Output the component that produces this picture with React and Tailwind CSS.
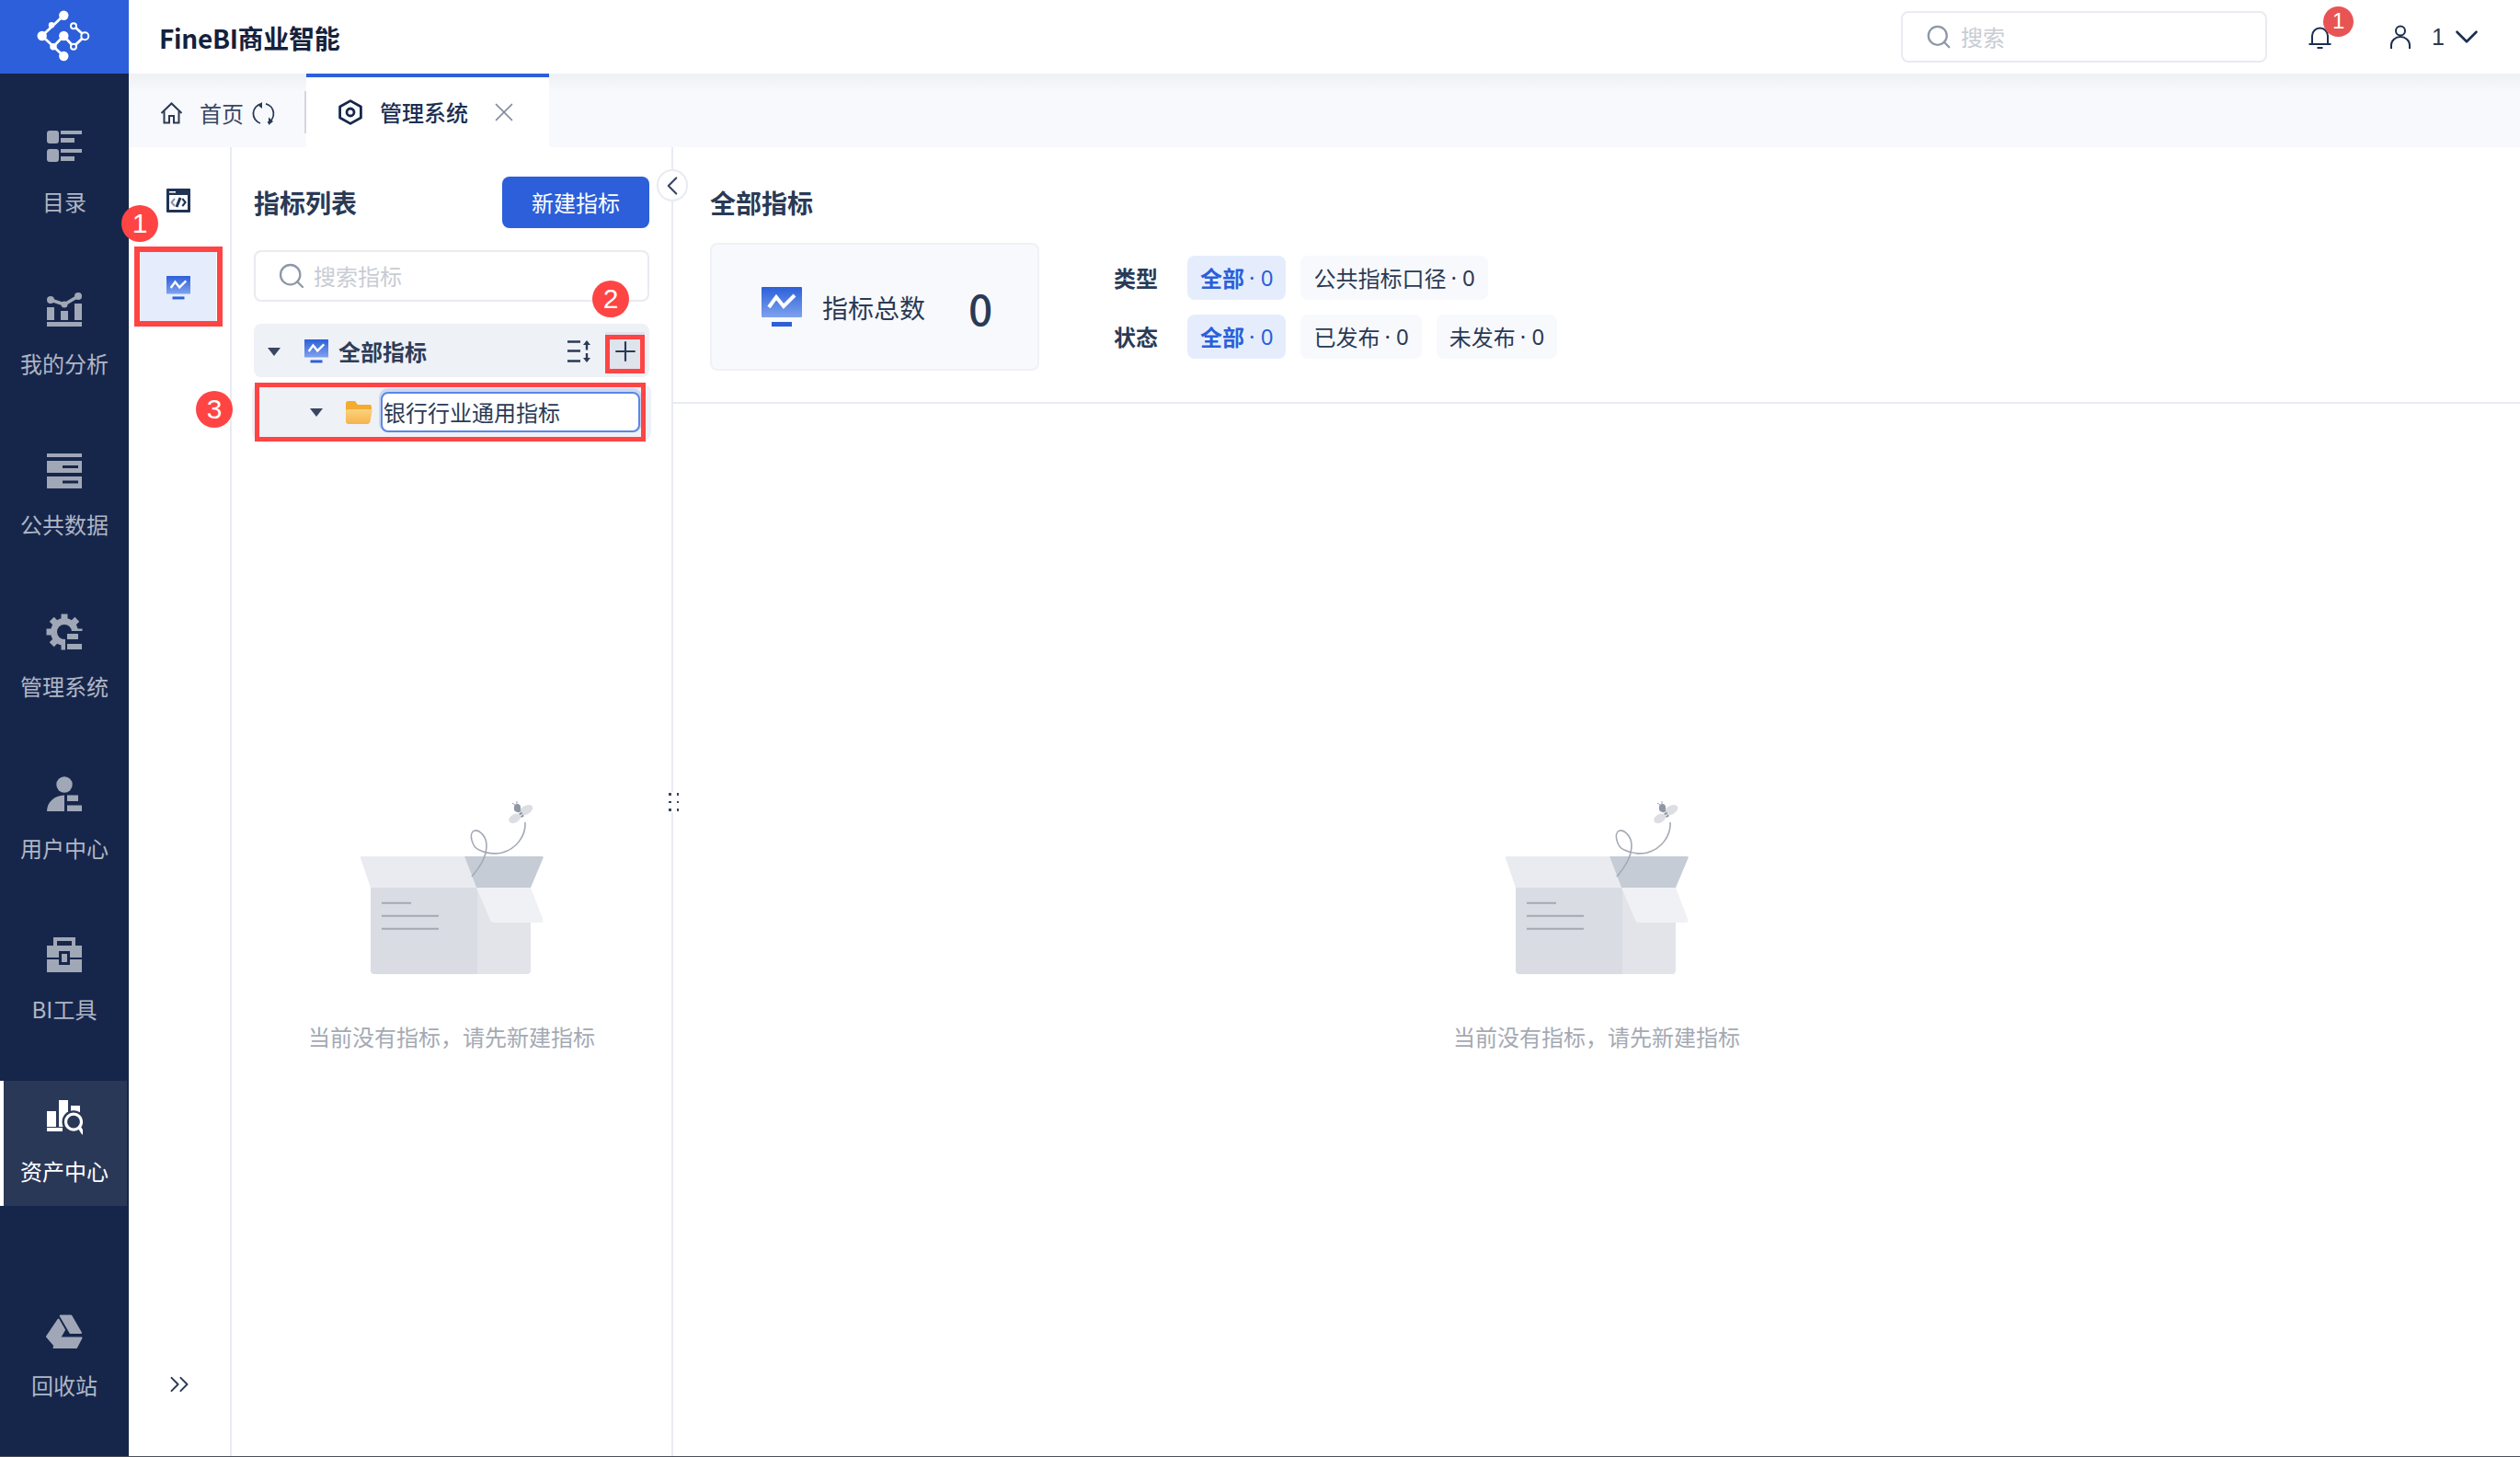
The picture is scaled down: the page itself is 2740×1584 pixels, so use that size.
import { Search, X, Plus, ChevronLeft, ChevronDown, ChevronsRight } from "lucide-react";

const SIDE_ICON = "#a0a7b6";
const SIDE_BG = "#16264b";

const Logo = () => (
  <svg width="80" height="80" viewBox="0 0 80 80" fill="none">
    <g stroke="#fff" strokeWidth="2.8">
      <path d="M39.3 16.7L15.7 39L39.3 61" />
      <path d="M28 50.7L39.3 39L50 50.7L62.3 39L50 28.3" />
    </g>
    <g fill="#fff">
      <circle cx="39.3" cy="16.7" r="5.2" />
      <circle cx="15.7" cy="39" r="5.2" />
      <circle cx="39.3" cy="39" r="5.2" />
      <circle cx="39.3" cy="61" r="5.2" />
      <circle cx="26" cy="27.3" r="3.2" />
      <circle cx="28" cy="50.7" r="3.8" />
    </g>
    <g fill="#2c5fd9" stroke="#fff" strokeWidth="2">
      <circle cx="50" cy="28.3" r="3" />
      <circle cx="62.3" cy="39.3" r="4" />
      <circle cx="50" cy="50.7" r="3" />
    </g>
  </svg>
);

const CatalogIcon = () => (
  <svg width="40" height="40" viewBox="0 0 40 40" fill={SIDE_ICON}>
    <rect x="1" y="2" width="13" height="14" rx="3" />
    <rect x="16" y="2" width="23" height="4" />
    <rect x="16" y="10" width="15" height="5" />
    <rect x="1" y="22" width="13" height="14" rx="3" />
    <rect x="16" y="22" width="23" height="4" />
    <rect x="16" y="30" width="15" height="5" />
  </svg>
);

const AnalysisIcon = () => (
  <svg width="40" height="40" viewBox="0 0 40 40" fill={SIDE_ICON}>
    <path d="M5 10L20 15L35 6" fill="none" stroke={SIDE_ICON} strokeWidth="3.5" />
    <circle cx="5" cy="10" r="4" />
    <circle cx="20" cy="15" r="3.5" />
    <circle cx="35" cy="6" r="4" />
    <rect x="1" y="18" width="8" height="14" />
    <rect x="16" y="22" width="8" height="10" />
    <rect x="31" y="14" width="8" height="18" />
    <rect x="1" y="34" width="38" height="5" />
  </svg>
);

const PublicDataIcon = () => (
  <svg width="40" height="40" viewBox="0 0 40 40" fill={SIDE_ICON}>
    <rect x="1" y="2" width="38" height="4" />
    <rect x="1" y="10" width="38" height="13" />
    <rect x="1" y="27" width="38" height="13" />
    <rect x="18" y="15" width="17" height="3" fill={SIDE_BG} />
    <rect x="18" y="31.5" width="17" height="3" fill={SIDE_BG} />
  </svg>
);

const TEETH = [0, 45, 90, 135, 180, 225, 270, 315];

const GearIcon = () => (
  <svg width="40" height="40" viewBox="0 0 40 40" fill={SIDE_ICON}>
    <mask id="gearCut">
      <rect width="40" height="40" fill="#fff" />
      <rect x="21" y="19" width="19" height="21" fill="#000" />
    </mask>
    <g mask="url(#gearCut)">
      <circle cx="20" cy="20" r="11.5" fill="none" stroke={SIDE_ICON} strokeWidth="7" />
      {TEETH.map((deg) => (
        <rect key={deg} x="16.5" y="0.5" width="7" height="6" transform={`rotate(${deg} 20 20)`} />
      ))}
    </g>
    <rect x="23" y="22" width="12" height="6" />
    <rect x="23" y="33" width="16" height="6" />
  </svg>
);

const UserCenterIcon = () => (
  <svg width="40" height="40" viewBox="0 0 40 40" fill={SIDE_ICON}>
    <circle cx="20" cy="10" r="8.7" />
    <path d="M1 39C1 29 9 22 20 21.5V39Z" />
    <rect x="23" y="21.5" width="12" height="6.5" />
    <rect x="23" y="32.5" width="16" height="6.5" />
  </svg>
);

const ToolIcon = () => (
  <svg width="40" height="40" viewBox="0 0 40 40" fill={SIDE_ICON}>
    <path d="M10 11V3H30V11" fill="none" stroke={SIDE_ICON} strokeWidth="4" />
    <rect x="1" y="10" width="38" height="13" />
    <rect x="1" y="25" width="38" height="14" />
    <rect x="14" y="16" width="12" height="15" fill={SIDE_BG} />
    <rect x="17" y="19" width="6" height="9" />
  </svg>
);

const AssetIcon = () => (
  <svg width="40" height="40" viewBox="0 0 40 40" fill="#fff">
    <rect x="1" y="14" width="10" height="17" />
    <rect x="14" y="2" width="10" height="29" />
    <rect x="27" y="8" width="10" height="12" />
    <rect x="1" y="32" width="17" height="4" />
    <circle cx="30" cy="25.7" r="12.5" fill="#2a3858" />
    <circle cx="30" cy="25.7" r="8.5" fill="none" stroke="#fff" strokeWidth="3.2" />
    <path d="M36.5 32L40 37.5" stroke="#fff" strokeWidth="3.6" strokeLinecap="round" />
  </svg>
);

const RecycleIcon = () => (
  <svg width="40" height="40" viewBox="0 0 40 40" fill={SIDE_ICON} stroke={SIDE_ICON} strokeWidth="2" strokeLinejoin="round">
    <path d="M15.7 3.5H27.3L38 22H26.5Z" />
    <path d="M13.5 7.5L20 18.7L10 36.5L1 26Z" />
    <path d="M14.5 27.5H38.5L33 38H8.5Z" />
  </svg>
);

const NAV_ITEMS = [
  ["目录", CatalogIcon],
  ["我的分析", AnalysisIcon],
  ["公共数据", PublicDataIcon],
  ["管理系统", GearIcon],
  ["用户中心", UserCenterIcon],
  ["BI工具", ToolIcon],
  ["资产中心", AssetIcon, true],
];

const NavItem = ({ label, Icon, active }) => (
  <div
    className={`flex h-[136px] flex-col items-center pt-[19px] ${
      active ? "mr-[2px] border-l-4 border-white bg-[#2a3858] pr-[2px] text-white" : "text-[#b0b6c4]"
    }`}
  >
    <Icon />
    <span className="mt-[21px] text-[24px] leading-[36px]">{label}</span>
  </div>
);

const MetricIcon = ({ id, className }) => (
  <svg className={className} viewBox="0 0 44 44">
    <defs>
      <linearGradient id={id} x1="0" y1="0" x2="0" y2="1">
        <stop offset="0%" stopColor="#2c5fd9" />
        <stop offset="100%" stopColor="#7fa2ee" />
      </linearGradient>
    </defs>
    <rect x="0" y="0" width="44" height="33" rx="1" fill={`url(#${id})`} />
    <path d="M8 22L16 11L24 21L36 9" fill="none" stroke="#fff" strokeWidth="4" />
    <rect x="11" y="38" width="22" height="5" fill="#2c5fd9" />
  </svg>
);

const CodeIcon = () => (
  <svg width="26" height="26" viewBox="0 0 26 26">
    <rect width="26" height="26" rx="1" fill="#1f3355" />
    <rect x="3" y="3" width="7" height="1.6" fill="#fff" />
    <rect x="3" y="7" width="20" height="16" fill="#fff" />
    <path d="M9 11L5.5 15L9 19M17 11L20.5 15L17 19" fill="none" stroke="#8b93a3" strokeWidth="2" />
    <path d="M15 10L11 20" fill="none" stroke="#1f3355" strokeWidth="3" />
    <path d="M17.5 11L20.5 15L17.5 19" fill="none" stroke="#1f3355" strokeWidth="2" />
  </svg>
);

const HomeIcon = () => (
  <svg width="25" height="24" viewBox="0 0 25 24" fill="none" stroke="#2a3a55" strokeWidth="2">
    <path d="M1.5 12L12.5 1.5L23.5 12" />
    <path d="M4.5 10V22.5H10V15H15V22.5H20.5V10" />
  </svg>
);

const RefreshIcon = () => (
  <svg width="25" height="25" viewBox="0 0 25 25" fill="none" stroke="#2a3a55" strokeWidth="1.8">
    <path d="M10 1.8A11 11 0 0 0 9 23" />
    <path d="M15 1.8A11 11 0 0 1 17 22.5" />
    <path d="M11 0V7L6.5 3.5Z" fill="#2a3a55" stroke="none" />
    <path d="M18 25V16.5L23 21Z" fill="#2a3a55" stroke="none" />
  </svg>
);

const HexIcon = () => (
  <svg width="26" height="28" viewBox="0 0 26 28" fill="none" stroke="#14284c" strokeWidth="2.8">
    <path d="M13 1.6L24.4 8V20L13 26.4L1.6 20V8Z" strokeLinejoin="round" />
    <circle cx="13" cy="14" r="4" />
  </svg>
);

const BellIcon = () => (
  <svg width="25" height="25" viewBox="0 0 25 25" fill="none" stroke="#1c2f52" strokeWidth="2">
    <path d="M4 20V11A8.5 8.5 0 0 1 21 11V20" />
    <path d="M0.5 20H24.5" />
    <path d="M9.5 24H15.5" />
  </svg>
);

const UserIcon = () => (
  <svg width="22" height="26" viewBox="0 0 22 26" fill="none" stroke="#1c2f52" strokeWidth="2">
    <circle cx="11" cy="6.5" r="5" />
    <path d="M1 26V22A10 9 0 0 1 21 22V26" />
  </svg>
);

const SortIcon = () => (
  <svg width="28" height="24" viewBox="0 0 28 24" fill="none" stroke="#2a3a55" strokeWidth="2.4">
    <path d="M0 1.5H14M0 11.5H14M0 22.5H14" />
    <path d="M21 4V10.5M21 14V20" />
    <path d="M21 0L25 5H17Z" fill="#2a3a55" stroke="none" />
    <path d="M21 24L25 19H17Z" fill="#2a3a55" stroke="none" />
  </svg>
);

const FolderIcon = () => (
  <svg width="29" height="25" viewBox="0 0 29 25">
    <defs>
      <linearGradient id="folderFront" x1="0" y1="0" x2="0" y2="1">
        <stop offset="0%" stopColor="#fbd27f" />
        <stop offset="100%" stopColor="#f5b34a" />
      </linearGradient>
    </defs>
    <path d="M0 3Q0 0 3 0H10L13 4H26Q28 4 28 7V12H0Z" fill="#f4ab2f" />
    <path d="M2 9H27Q29 9 28.6 11L26.5 22Q26 25 23 25H3Q0 25 0 22V11Q0 9 2 9Z" fill="url(#folderFront)" />
  </svg>
);

const Caret = () => <div className="h-0 w-0 border-x-[7px] border-t-[9px] border-x-transparent border-t-[#3a4762]" />;

const EmptyBox = () => (
  <svg width="200" height="188" viewBox="0 0 200 188">
    <path d="M2 60H114L127 94H12L1 62Q0.5 60 2 60Z" fill="#e9ebf0" />
    <path d="M114 60H198Q200.5 60 199.5 62L186 94H127Z" fill="#c5ccd6" />
    <path d="M12 94H128V188H16Q12 188 12 184Z" fill="#d9dce3" />
    <path d="M128 94H186V184Q186 188 182 188H128Z" fill="#e2e4e9" />
    <path d="M127 94H186L199.5 129Q200 132 197 132H146Q143 132 142 129Z" fill="#f0f1f5" />
    <path d="M24 110.7H56M24 124.7H86M24 138.7H86" stroke="#a3a8b3" strokeWidth="2" />
    <path
      d="M122 82C132 70 138 60 138 48C138 38 130 31 125 32C118 34 122 50 130 53C140 58 150 57 155 56C170 52 181 38 180 23"
      fill="none"
      stroke="#a3a9b5"
      strokeWidth="1.6"
    />
    <ellipse cx="181" cy="9.7" rx="8" ry="4.8" transform="rotate(-30 181 9.7)" fill="#dcdee3" />
    <ellipse cx="168.7" cy="18.7" rx="7" ry="4.6" transform="rotate(-30 168.7 18.7)" fill="#dcdee3" />
    <ellipse cx="171.5" cy="7.5" rx="3.6" ry="4.4" fill="#8f96a5" />
    <path d="M173 10L178 18" stroke="#8f96a5" strokeWidth="3.4" strokeDasharray="2 1.2" />
    <path d="M171 3L171 0M169 4L166 2" stroke="#8f96a5" strokeWidth="0.9" />
  </svg>
);

const EmptyState = ({ className }) => (
  <div className={`flex flex-col items-center ${className}`}>
    <EmptyBox />
    <p className="mt-[50px] text-[24px] leading-[36px] text-[#a4a9b3]">当前没有指标，请先新建指标</p>
  </div>
);

const Chip = ({ label, active }) => (
  <div
    className={`flex h-[48px] items-center rounded-lg px-[14px] text-[24px] whitespace-pre ${
      active ? "bg-[#e5edfd] text-[#2c5fd9]" : "bg-[#f8f9fc] text-[#2a3a55]"
    }`}
  >
    <span className={active ? "font-bold" : ""}>{label}</span>
    <span className="ml-[5px] font-['Noto_Sans',sans-serif]">· 0</span>
  </div>
);

const Marker = ({ className, children }) => (
  <div
    className={`absolute z-10 flex h-[40px] w-[40px] items-center justify-center rounded-full bg-[#ff4444] font-['Liberation_Sans',sans-serif] text-[30px] leading-none text-white ${className}`}
  >
    {children}
  </div>
);

const App = () => {
  return (
    <div className="flex h-[1584px] w-[2740px] flex-col overflow-hidden bg-white font-['Noto_Sans_CJK_SC','Noto_Sans',sans-serif] text-[#2a3a55]">
      <div className="flex min-h-0 flex-1">
        <aside className="flex w-[140px] flex-col bg-[#16264b]">
          <div className="flex h-[80px] items-center justify-center bg-[#2c5fd9]">
            <Logo />
          </div>
          <nav className="flex flex-1 flex-col gap-[39.7px] pt-[41px] pb-[39px]">
            {NAV_ITEMS.map(([label, Icon, active]) => (
              <NavItem key={label} label={label} Icon={Icon} active={active} />
            ))}
            <div className="mt-auto">
              <NavItem label="回收站" Icon={RecycleIcon} />
            </div>
          </nav>
        </aside>

        <div className="flex min-w-0 flex-1 flex-col">
          <header className="flex h-[80px] items-center pr-[37px] pl-[33px]">
            <h1 className="pt-[1px] text-[28px] leading-[40px] font-semibold tracking-[-0.3px] text-[#14213d]">FineBI商业智能</h1>
            <div className="ml-auto flex h-[56px] w-[398px] items-center rounded-lg border-2 border-[#e8ebf0] pl-[24px]">
              <Search size={30} strokeWidth={1.8} className="text-[#8e97a8]" />
              <span className="ml-[9px] text-[24px] text-[#c8ccd3]">搜索</span>
            </div>
            <div className="relative ml-[45px]">
              <BellIcon />
              <div className="absolute top-[-21px] left-[16px] flex h-[33px] w-[33px] items-center justify-center rounded-full bg-[#e85454] font-['Liberation_Sans',sans-serif] text-[24px] text-white">
                1
              </div>
            </div>
            <div className="ml-[64px]">
              <UserIcon />
            </div>
            <span className="ml-[23px] font-['Liberation_Sans',sans-serif] text-[25px] leading-none">1</span>
            <ChevronDown size={42} strokeWidth={1.5} className="ml-[3px] text-[#1c2f52]" />
          </header>

          <div className="flex h-[80px] bg-linear-to-b from-[#eef0f4] to-[#f8f9fc] to-[25%]">
            <div className="flex w-[191px] items-center pt-[6px] pl-[34px] text-[24px] text-[#3a4762]">
              <HomeIcon />
              <span className="ml-[18px]">首页</span>
              <span className="ml-[9px]">
                <RefreshIcon />
              </span>
            </div>
            <div className="mt-[19px] h-[46px] w-[2px] bg-[#d4d7de]" />
            <div className="flex w-[264px] items-center border-t-4 border-[#2c5fd9] bg-white pl-[35px]">
              <HexIcon />
              <span className="ml-[19px] text-[24px] font-medium text-[#1c2f52]">管理系统</span>
              <X size={34} strokeWidth={1.2} className="ml-[22px] text-[#7e8798]" />
            </div>
          </div>

          <main className="relative flex min-h-0 flex-1">
            <div className="flex w-[112px] flex-col items-center border-r-2 border-[#e8ebf2] pt-[45px] pr-[2px]">
              <CodeIcon />
              <div className="mt-[42px] flex h-[77px] w-[82px] items-center justify-center bg-[#e5edfd] pt-[2px]">
                <MetricIcon id="metricTile" className="h-[26px] w-[26px]" />
              </div>
            </div>

            <section className="relative flex w-[480px] flex-col border-r-2 border-[#e8ebf2] px-[24px] pt-[32px]">
              <div className="flex h-[56px] items-center justify-between">
                <h2 className="text-[28px] font-bold">指标列表</h2>
                <button type="button" className="h-[56px] w-[160px] rounded-lg bg-[#2c5fd9] text-[24px] text-white">
                  新建指标
                </button>
              </div>
              <div className="mt-[24px] flex h-[56px] items-center rounded-lg border-2 border-[#e8ebf0] pl-[23px]">
                <Search size={32} strokeWidth={1.7} className="text-[#8e97a8]" />
                <span className="ml-[8px] text-[24px] text-[#c8ccd3]">搜索指标</span>
              </div>
              <div className="mt-[24px] flex h-[58px] items-center rounded-lg bg-[#eef1f6] pt-[2px] pl-[15px]">
                <Caret />
                <MetricIcon id="metricRow" className="ml-[26px] h-[26px] w-[26px]" />
                <span className="ml-[11px] text-[24px] font-bold text-[#2f3c57]">全部指标</span>
                <div className="ml-auto mr-[13px]">
                  <SortIcon />
                </div>
                <div className="mr-[5px] flex h-[42px] w-[43px] items-center justify-center bg-[#dfe3ec]">
                  <Plus size={34} strokeWidth={1.5} className="text-[#2a3a55]" />
                </div>
              </div>
              <div className="mx-[-2px] mt-[8px] flex h-[60px] items-center rounded-lg bg-[#eef1f6] pl-[63px]">
                <Caret />
                <div className="ml-[25px]">
                  <FolderIcon />
                </div>
                <div className="ml-[9px] flex h-[44px] w-[282px] items-center rounded-lg border-2 border-[#5b87e6] bg-white pl-[1px] text-[24px] shadow-[0_-2px_0_2px_#ccd7f1]">
                  银行行业通用指标
                </div>
              </div>
              <EmptyState className="mt-[393px]" />

              <div className="absolute top-[701px] right-[-8px] grid grid-cols-2 gap-x-[6px] gap-y-[6px] bg-white py-[1px]">
                {[0, 1, 2, 3, 4, 5].map((dot) => (
                  <span key={dot} className="h-[2.5px] w-[2.5px] bg-[#3a4762]" />
                ))}
              </div>
              <div className="absolute top-[24px] right-[-18px] z-10 flex h-[35px] w-[34px] items-center justify-center rounded-full border-2 border-[#e8ebf0] bg-white">
                <ChevronLeft size={34} strokeWidth={1.5} className="shrink-0 text-[#3a4762]" />
              </div>
            </section>

            <section className="flex min-w-0 flex-1 flex-col">
              <div className="px-[40px] pt-[40px]">
                <h2 className="text-[28px] leading-[40px] font-bold">全部指标</h2>
                <div className="mt-[24px] flex items-center">
                  <div className="flex h-[139px] w-[358px] items-center rounded-lg border-2 border-[#eff1f6] bg-[#f8f9fc] pl-[54px]">
                    <MetricIcon id="metricCard" className="h-[44px] w-[44px]" />
                    <span className="ml-[22px] text-[28px]">指标总数</span>
                    <span className="ml-[47px] text-[46px] leading-none font-medium">0</span>
                  </div>
                  <div className="ml-[81px] flex flex-col gap-[16px]">
                    <div className="flex items-center">
                      <span className="w-[80px] text-[24px] font-bold">类型</span>
                      <div className="flex gap-[16px]">
                        <Chip label="全部" active />
                        <Chip label="公共指标口径" />
                      </div>
                    </div>
                    <div className="flex items-center">
                      <span className="w-[80px] text-[24px] font-bold">状态</span>
                      <div className="flex gap-[16px]">
                        <Chip label="全部" active />
                        <Chip label="已发布" />
                        <Chip label="未发布" />
                      </div>
                    </div>
                  </div>
                </div>
              </div>
              <div className="mt-[34px] h-[2px] bg-[#e8ebf2]" />
              <EmptyState className="mt-[432px]" />
            </section>

            <Marker className="top-[63px] left-[-8px]">1</Marker>
            <Marker className="top-[145px] left-[504px]">2</Marker>
            <Marker className="top-[265px] left-[73px]">3</Marker>
            <div className="absolute top-[108px] left-[6px] h-[87px] w-[96px] border-[6px] border-[#ff4444]" />
            <div className="absolute top-[204px] left-[518px] h-[42px] w-[43px] border-[5px] border-[#ff4444]" />
            <div className="absolute top-[256px] left-[137px] h-[64px] w-[425px] border-[5px] border-[#ff4444]" />

            <div className="absolute bottom-[61px] left-[38px] text-[#2a3a55]">
              <ChevronsRight size={34} strokeWidth={1.4} />
            </div>
          </main>
        </div>
      </div>
      <div className="h-px bg-[#4a4f5a]" />
    </div>
  );
};

export default App;
